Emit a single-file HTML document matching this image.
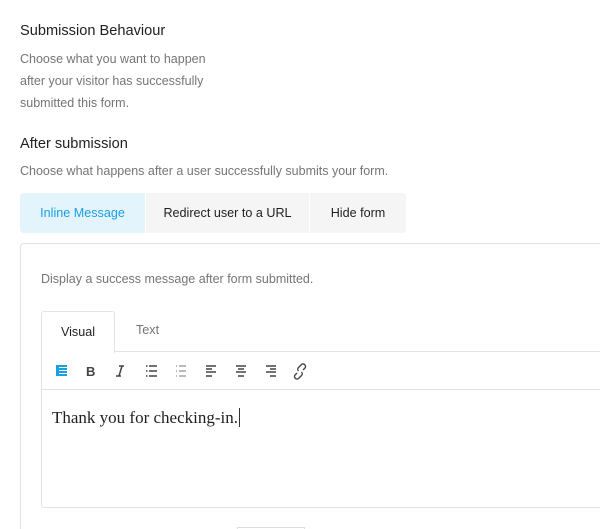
<!DOCTYPE html>
<html><head><style>
html,body{margin:0;width:600px;height:529px;overflow:hidden}
body{background:#fff;font-family:"Liberation Sans",Arial,sans-serif;position:relative}
.a{position:absolute;white-space:nowrap}
.t{font-size:14.6px;color:#1e1f21}
.g{font-size:12.5px;color:#757575;line-height:22px}
.tab{position:absolute;top:193px;height:40px;line-height:40px;text-align:center;font-size:12.6px;background:#f5f5f5;color:#1e1f21}
</style></head><body>
<div class="a t" style="left:20px;top:23px">Submission Behaviour</div>
<div class="a g" style="left:20px;top:48px">Choose what you want to happen<br>after your visitor has successfully<br>submitted this form.</div>
<div class="a t" style="left:20px;top:136px">After submission</div>
<div class="a g" style="left:20px;top:160px">Choose what happens after a user successfully submits your form.</div>
<div class="tab" style="left:20px;width:125px;background:#e3f4fd;color:#1a9fe0;border-radius:4px 0 0 4px">Inline Message</div>
<div class="tab" style="left:146px;width:163px">Redirect user to a URL</div>
<div class="tab" style="left:310px;width:96px;border-radius:0 4px 4px 0">Hide form</div>
<div class="a" style="left:20px;top:243px;width:600px;height:300px;border:1px solid #e3e3e3;border-radius:4px"></div>
<div class="a g" style="left:41px;top:268px">Display a success message after form submitted.</div>
<div class="a" style="left:41px;top:351px;width:580px;height:155px;border:1px solid #e3e3e3;border-radius:3px"></div>
<div class="a" style="left:41px;top:311px;width:72px;height:41px;border:1px solid #e3e3e3;border-bottom:none;background:#fff;border-radius:3px 3px 0 0;text-align:center;line-height:40px;font-size:12.6px;color:#1e1f21">Visual</div>
<div class="a" style="left:136px;top:323px;font-size:12.6px;color:#757575">Text</div>
<div class="a" style="left:42px;top:389px;width:580px;border-top:1px solid #e3e3e3"></div>
<svg class="a" style="left:50px;top:362px" width="270" height="18" viewBox="0 0 270 18">
<g fill="none" stroke="#444" stroke-width="1.4">
<rect x="6" y="3" width="11" height="11" fill="#1a9fe0" stroke="none"/>
<path d="M9 5.5h8M9 8.5h8M9 11.5h8" stroke="#fff" stroke-width="1"/>
<path d="M72 4l-3 10M69 4h5M66 14h5" stroke-width="1.5"/>
<path d="M96 4h1.5M99 4h8M96 9h1.5M99 9h8M96 14h1.5M99 14h8"/>
<path d="M126 4h1M129 4h7M126 9h1M129 9h7M126 14h1M129 14h7" stroke-width="1" stroke="#777"/>
<path d="M156 4h10M156 7h6M156 10h10M156 14h6"/>
<path d="M186 4h10M188 7h6M186 10h10M188 14h6"/>
<path d="M216 4h10M220 7h6M216 10h10M220 14h6"/>
<path d="M247 11l-2 2a2.5 2.5 0 0 0 3.5 3.5l3-3a2.5 2.5 0 0 0 0-3.5M253 8l2-2a2.5 2.5 0 0 0-3.5-3.5l-3 3a2.5 2.5 0 0 0 0 3.5"/>
</g>
<text x="36" y="14" font-family="Liberation Sans" font-weight="bold" font-size="13" fill="#444">B</text>
</svg>
<div class="a" style="left:52px;top:408px;font-family:'Liberation Serif',serif;font-size:17px;color:#1e1f21">Thank you for checking-in.<span style="border-left:1px solid #333;margin-left:1px"></span></div>
<div class="a" style="left:237px;top:527px;width:66px;height:4px;border:1px solid #ddd;border-bottom:none"></div>
</body></html>
